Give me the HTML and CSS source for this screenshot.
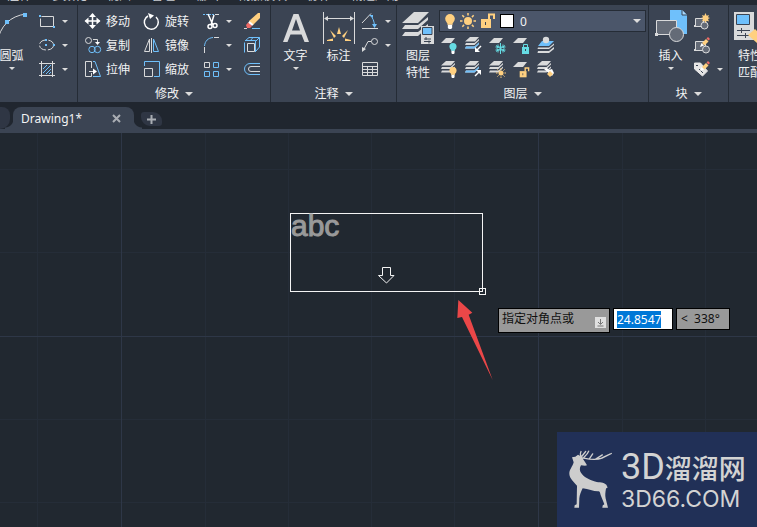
FILE: index.html
```html
<!DOCTYPE html>
<html lang="zh-CN">
<head>
<meta charset="utf-8">
<title>Drawing1</title>
<link rel="stylesheet" href="styles.css">
</head>
<body>
<svg class="defs" aria-hidden="true">
  <defs>
    <symbol id="sheets" viewBox="0 0 20 20"><path class="f" d="M6 2h9l-4 4.500H1zM2 8l-1 2h9.500L15 5.500V4l-4.500 4zM2 11.500l-1 2h9.500L15 9V7.500l-4.500 4z"/></symbol>
    <symbol id="sheet" viewBox="0 0 20 20"><path class="f" d="M6 3h9l-4 5H1z"/></symbol>
    <symbol id="bulb" viewBox="0 0 10 14"><circle cx="5" cy="4.500" r="4.500"/><path d="M2.500 7h5v3h-5z"/><path class="w" d="M3 10h4v3l-1 1H4l-1-1z"/></symbol>
    <symbol id="sun" viewBox="0 0 16 16"><circle cx="8" cy="8" r="4"/><path class="ray" d="M8 0v2.500M8 13.500V16M0 8h2.500M13.500 8H16M2.300 2.300l1.800 1.800M11.900 11.900l1.800 1.800M2.300 13.700l1.800-1.800M11.900 4.100l1.800-1.800"/></symbol>
    <symbol id="unlock" viewBox="0 0 16 16"><path d="M1 6h10v9H1z"/><path class="shackle" d="M9 6V1.500h5V6"/><path class="hole" d="M5.500 9v3"/></symbol>
    <symbol id="pencil" viewBox="0 0 10 10"><path class="yf" d="M2 6l4-4 2.500 2.500-4 4z"/><path class="rf" d="M6.500 1.500L8 0l2 2-1.500 1.500z"/><path class="w" d="M0 10l1.500-4 2.500 2.500z"/></symbol>
  </defs>
</svg>

<nav class="menu">
  <a href="#annotate">注释</a><a href="#parametric">参数化</a><a href="#view">视图</a><a href="#manage">管理</a><a href="#output">输出</a><a href="#addins">附加模块</a><a href="#collab">协作</a><a href="#apps">精选应用</a>
</nav>

<div class="ribbon">
  <section class="panel draw">
    <div class="body">
      <button class="big"><svg class="i32" viewBox="0 0 32 32"><path class="s2" d="M1 31C4 14 14 4 30 2"/><path class="bf" d="M9 8h4v4H9zM27 1h4v4h-4z"/></svg><span>圆弧</span><i class="caret"></i></button>
      <div class="rows">
        <button class="tool"><svg class="i20" viewBox="0 0 20 20"><path class="s" d="M4.500 5.500h12v10h-13v-8"/><path class="bf" d="M2 4h2v2H2zM16 15h2v2h-2z"/></svg><i class="caret"></i></button>
        <button class="tool"><svg class="i20" viewBox="0 0 20 20"><ellipse class="s" cx="9.500" cy="10" rx="7" ry="5" stroke-dasharray="8 2"/><path class="bf" d="M8 4h2v2H8zM8 9h2v2H8zM16 9h2v2h-2z"/></svg><i class="caret"></i></button>
        <button class="tool"><svg class="i20" viewBox="0 0 20 20"><path class="s" d="M2 4.500h16M2 16.500h16M4.500 2v16M15.500 2v16"/><path class="b" d="M6 10l4-4M6 14l8-8M9 15l5-5M12 15l2-2"/></svg><i class="caret"></i></button>
      </div>
    </div>
  </section>

  <section class="panel modify">
    <div class="body">
      <button class="tool"><svg class="i20" viewBox="0 0 20 20"><path class="s2w" d="M9.500 3v14M2.500 10h14"/><path class="w" d="M9.500 2l3.500 4H6zM9.500 18L6 14h7zM1.500 10L5.500 6.500v7zM17.500 10l-4-3.500v7z"/></svg><span>移动</span></button>
      <button class="tool"><svg class="i20" viewBox="0 0 20 20"><path class="s2w" d="M6 5a7 7 0 1 0 8 1"/><path class="w" d="M6 2l6 2.500L8 8z"/></svg><span>旋转</span></button>
      <button class="tool"><svg class="i20" viewBox="0 0 20 20"><path class="b dash" d="M2 3.500h12"/><path class="s" d="M14 3.500h4"/><path class="s2w" d="M7 3l5 11M13 4l-3 10"/><circle class="s2w" cx="9" cy="15.500" r="2"/><circle class="s2w" cx="14" cy="14.500" r="2"/></svg><i class="caret"></i></button>
      <button class="tool"><svg class="i20" viewBox="0 0 20 20"><path class="b" d="M10 17.500h8"/><path class="s" d="M2 17.500h3"/><path class="yf" d="M16 2h2v5l-7 7-4-4z"/><path class="w" d="M7.500 10l4 3.500-1.500 1.500-4-3z"/><path class="rf" d="M6 11.500l4 3.500-2 2H5l-1-3z"/></svg></button>

      <button class="tool"><svg class="i20" viewBox="0 0 20 20"><circle class="s" cx="5.500" cy="5.500" r="3"/><path class="s" d="M10 4.500h4.500V8"/><path class="w" d="M12 7h5l-2.500 3z"/><circle class="b" cx="9" cy="14.500" r="3.200"/><circle class="b" cx="14.500" cy="14.500" r="3.200"/></svg><span>复制</span></button>
      <button class="tool"><svg class="i20" viewBox="0 0 20 20"><path class="s" d="M7.500 4v12.500H2.500z"/><path class="b" d="M11.500 4v12.500h5z"/><path class="s" d="M9.500 3v15"/></svg><span>镜像</span></button>
      <button class="tool"><svg class="i20" viewBox="0 0 20 20"><path class="b" d="M3.500 11C4 6 7 3 12 2.500"/><path class="s" d="M13 2.500h5M3.500 12v6"/></svg><i class="caret"></i></button>
      <button class="tool"><svg class="i20" viewBox="0 0 20 20"><path class="b" d="M2.500 17.500V7.500M3 6l4-3.500h10.500V12L14 16M14 6l3.500-3.500M3 5.500h10.500V17M11 2.500L8 6"/><path class="s" d="M5.500 8.500h7v8h-7z"/></svg></button>

      <button class="tool"><svg class="i20" viewBox="0 0 20 20"><path class="s" d="M8.500 9V2.500h-6v15h6V14M6 12.500h5"/><path class="w" d="M10 9.500l4 3-4 3z"/><path class="b" d="M10 2.500h2l5.500 15H10"/></svg><span>拉伸</span></button>
      <button class="tool"><svg class="i20" viewBox="0 0 20 20"><path class="b" d="M2.500 7V2.500h15v15H12"/><path class="s" d="M2.500 9.500h8v8h-8z"/></svg><span>缩放</span></button>
      <button class="tool"><svg class="i20" viewBox="0 0 20 20"><path class="s" d="M3.500 3.500h5v5h-5z"/><path class="b" d="M12.500 3.500h5v5h-5zM3.500 12.500h5v5h-5zM12.500 12.500h5v5h-5z"/></svg><i class="caret"></i></button>
      <button class="tool"><svg class="i20" viewBox="0 0 20 20"><path class="b" d="M18 4.500H8a5.500 5.500 0 0 0 0 11h10"/><path class="s" d="M18 7.500H9a2.500 2.500 0 0 0 0 5h9"/></svg></button>
    </div>
    <button class="title">修改<i class="caret wide"></i></button>
  </section>

  <section class="panel annotate">
    <div class="body">
      <button class="big"><svg class="i32" viewBox="0 0 32 32"><path class="f" d="M3 30L13.500 2h5L29 30h-4.500l-3-7.500h-11L7.500 30zM12 18.500h8L16 7z"/></svg><span>文字</span><i class="caret"></i></button>
      <button class="big"><svg class="i32" viewBox="0 0 32 32"><path class="s" d="M.5 0v32M31.500 0v32M2 6.500h28"/><path class="f" d="M1 6.500L5 4v5zM31 6.500L27 4v5z"/><path class="yf" d="M16 15l2 7h-4zM7 18l6 6-2 2zM25 18l-6 6 2 2zM4 28l6-1.500V29H4zM28 28l-6-1.500V29h6z"/></svg><span>标注</span></button>
      <div class="rows">
        <button class="tool"><svg class="i20" viewBox="0 0 20 20"><path class="s" d="M2 17.500h16M2 12l9-9.500"/><path class="b" d="M10 4c3 3 4 6 4.500 10"/><path class="bf" d="M9 4h4v3zM12 13h5l-2.500 4z"/></svg><i class="caret"></i></button>
        <button class="tool"><svg class="i20" viewBox="0 0 20 20"><circle class="s" cx="14.500" cy="6.500" r="3"/><path class="s" d="M11 6.500H8L4 14"/><path class="f" d="M2 17v-5l4 2z"/></svg><i class="caret"></i></button>
        <button class="tool"><svg class="i20" viewBox="0 0 20 20"><path class="s" d="M2.500 3.500h15v13h-15zM2 7.500h16M2 10.500h16M2 13.500h16M7.500 7v10M12.500 7v10"/></svg></button>
      </div>
    </div>
    <button class="title">注释<i class="caret wide"></i></button>
  </section>

  <section class="panel layers">
    <div class="body">
      <button class="big"><svg class="i32" viewBox="0 0 32 32"><path class="f" d="M12 0h15L16 11H0zM3 13l-3 4h16l10-9V5l-10 8zM3 20l-3 4h16l10-9v-3l-10 8z"/><path class="p" d="M19 14h13v18H19z"/><path class="bf" d="M21 16h9v6h-9z"/><path class="d" d="M20.500 15.500h9.500v7h-9.500zM22 27h7M22 29.500h7M24 25v3M27 28.500v3"/></svg><span>图层</span><span>特性</span></button>
      <div class="stack">
        <button class="combo" aria-haspopup="listbox" aria-label="图层">
          <svg class="bulb y" viewBox="0 0 10 14"><use href="#bulb"/></svg>
          <svg class="i16 y" viewBox="0 0 16 16"><use href="#sun"/></svg>
          <svg class="i16 y" viewBox="0 0 16 16"><use href="#unlock"/></svg>
          <i class="swatch"></i><span class="name">0</span><i class="caret wide"></i>
        </button>
        <div class="icons">
          <button class="tool"><svg class="i20" viewBox="0 0 20 20"><use href="#sheet"/><use class="t" href="#bulb" x="9" y="8" width="8" height="11"/></svg></button>
          <button class="tool"><svg class="i20" viewBox="0 0 20 20"><use href="#sheets"/><path class="bf" d="M2 11.500l-1 2h9.500L15 9V7.500l-4.500 4z"/><path class="s2w" d="M17 11l-5 5"/><path class="w" d="M11 17v-5l5 5z"/></svg></button>
          <button class="tool"><svg class="i20" viewBox="0 0 20 20"><use href="#sheet"/><path class="ts" d="M12.500 8v11M8 10.500l9 6M8 16.500l9-6M10 9.500v2.500H7.500M15 9.500v2.500h2.500M10 17.500V15H7.500M15 17.500V15h2.500M10 12h5l1 1.500-1 1.500h-5l-1-1.500z"/></svg></button>
          <button class="tool"><svg class="i20" viewBox="0 0 20 20"><use href="#sheet"/><path class="tf" d="M10 12h7v7h-7z"/><path class="ts" d="M11.500 12V9.500h4V12"/><path class="d" d="M13.500 14v2"/></svg></button>
          <button class="tool"><svg class="i20" viewBox="0 0 20 20"><path class="bf" d="M6 6h12l-5 5H2z"/><circle class="f" cx="10" cy="5" r="3.200"/><path class="f" d="M2 12.500l-.5 1.500H13l5-4V8.500l-5 4zM2 16l-.5 2H13l5-4v-2l-5 4z"/></svg></button>
          <button class="tool"><svg class="i20" viewBox="0 0 20 20"><use href="#sheets"/><use class="y" href="#bulb" x="9" y="8" width="8" height="11"/></svg></button>
          <button class="tool"><svg class="i20" viewBox="0 0 20 20"><use href="#sheets"/><path class="bf" d="M2 11.500l-1 2h9.500L15 9V7.500l-4.500 4z"/><path class="s2w" d="M11 17l5-5"/><path class="w" d="M17 11v5l-5-5z"/></svg></button>
          <button class="tool"><svg class="i20" viewBox="0 0 20 20"><use href="#sheets"/><use class="y" href="#sun" x="8" y="9" width="10" height="10"/></svg></button>
          <button class="tool"><svg class="i20" viewBox="0 0 20 20"><use href="#sheet"/><use class="y" href="#unlock" x="7" y="8" width="11" height="11"/></svg></button>
          <button class="tool"><svg class="i20" viewBox="0 0 20 20"><use href="#sheets"/><path class="w" d="M8 10l3-1 2 2 3-1 2 4-2 3z"/><path class="yf" d="M11 15l3-3 3 3-3 3z"/></svg></button>
        </div>
      </div>
    </div>
    <button class="title">图层<i class="caret wide"></i></button>
  </section>

  <section class="panel block">
    <div class="body">
      <button class="big"><svg class="i32" viewBox="0 0 32 32"><path class="bf" d="M15 -2h12l5 5v19H15z"/><path class="cut" d="M27-2v5h5"/><path class="g" d="M1.500 8.500h20v14h-20z"/><circle class="g" cx="21.500" cy="22.500" r="7"/><path class="p" d="M0 21h3v3H0z"/></svg><span>插入</span><i class="caret"></i></button>
      <div class="rows">
        <button class="tool"><svg class="i20" viewBox="0 0 20 20"><path class="g" d="M3.500 7.500h8v8h-8z"/><circle class="g" cx="12.500" cy="14.500" r="3.500"/><path class="yf" d="M13.500 2l1.200 2.800L17 4l-1 2.300 2 .7-2 1 1 2.500-2.300-.8L13.500 12l-1.200-2.300-2.300.8 1-2.500-2-1 2-.7L10 4l2.300.8z"/><path class="p" d="M2 14h2v2H2z"/></svg></button>
        <button class="tool"><svg class="i20" viewBox="0 0 20 20"><path class="g" d="M3.500 6.500h10v9h-10z"/><circle class="g" cx="14" cy="14.500" r="3.500"/><use href="#pencil" x="8" y="2" width="10" height="10"/><path class="p" d="M2 14h2v2H2z"/></svg></button>
        <button class="tool"><svg class="i20" viewBox="0 0 20 20"><path class="tag" d="M2.500 4h6l7 8-5 5-8-7z"/><path class="d" d="M4 6.500h2M7 10l4 4"/><use href="#pencil" x="8" y="2" width="10" height="10"/></svg><i class="caret"></i></button>
      </div>
    </div>
    <button class="title">块<i class="caret wide"></i></button>
  </section>

  <section class="panel props">
    <div class="body">
      <button class="big"><svg class="i32" viewBox="0 0 32 32"><path class="f" d="M0 0h20v28H0z"/><path class="bf" d="M3 3h13v9H3z"/><path class="d" d="M2.500 2.500h13v10h-13zM3 18.500h13M3 23.500h13M7.500 16v5M11.500 21v5"/><path class="yf" d="M14 23l7-6 9 9-7 5z"/></svg><span>特性</span><span>匹配</span></button>
    </div>
  </section>
</div>

<div class="tabs">
  <span class="previous"></span>
  <div class="tab"><span>Drawing1*</span><button class="close" aria-label="关闭"><svg viewBox="0 0 9 9"><path d="M1 1l7 7M8 1L1 8"/></svg></button></div>
  <button class="new" aria-label="新图形"><svg viewBox="0 0 9 9"><path d="M4.500 0v9M0 4.500h9"/></svg></button>
</div>

<main class="canvas">
  <svg class="grid" aria-hidden="true">
    <defs><pattern id="grid" x="121" y="203" width="417" height="417" patternUnits="userSpaceOnUse">
      <path class="minor" d="M84.500 0v417M167.500 0v417M250.500 0v417M333.500 0v417M0 83.500h417M0 166.500h417M0 250.500h417M0 333.500h417"/>
      <path class="major" d="M.5 0v417M0 .5h417"/>
    </pattern></defs>
    <rect width="100%" height="100%" fill="url(#grid)"/>
  </svg>
  <div class="mtext">abc
    <svg class="down" viewBox="0 0 18 18"><path d="M5.500 1.500h8v8h3.500l-7.500 7.500L1.500 9.500h4z"/></svg>
    <i class="grip"></i>
  </div>
  <svg class="pointer" viewBox="0 0 108 240"><path d="M4 0L46 38 35 44 107 240 15 51 1 54z"/></svg>
  <form class="prompt">
    <label for="distance">指定对角点或<svg viewBox="0 0 11 11"><path class="key" d="M0 0h11v11H0z"/><path class="arr" d="M5.500 2v5M3 5l2.500 2.500L8 5M2.500 9h6"/></svg></label>
    <input id="distance" value="24.8547">
    <output>&lt;  338°</output>
  </form>
  <div class="brand">
    <svg class="deer" viewBox="0 0 135 185">
      <path class="body-fill" d="M12 27l10-1 8-6 10 5 12 18 5 8-6 2-12-2c-5 7-4 17 0 23 8 13 24 21 42 26 14 4 26 1 34 10l4 8-5 3c-2 12-3 20-1 30l7 28h-17l1-7 5-4-9-22c-4-10-3-16-8-17-13 1-30-6-48-9-5 10-9 20-10 30l-1 29H19l1-8 6-3 1-55C12 96 4 88 4 76c0-13 10-21 13-34z"/>
      <path class="antler" d="M42 29c-6-6-6-12-3-19M41 25l12-15M44 31c8-8 14-12 18-22M47 30c20 4 36 7 55 0l28-14M64 32l10-15M83 33l20-13M102 29l24-11"/>
    </svg>
    <div class="words"><div class="cn"><span>3D</span>溜溜网</div><div class="en">3D66.COM</div></div>
  </div>
</main>
<script src="script.js"></script>
</body>
</html>
```
FILE: styles.css
```css
* { box-sizing: border-box; }
html, body { height: 100%; }
body {
  margin: 0;
  display: flex;
  flex-direction: column;
  overflow: hidden;
  background: #212830;
  color: #f2f3f4;
  font: 12px/17px "Noto Sans", "Noto Sans CJK SC", sans-serif;
}
button { margin: 0; padding: 0; border: 0; background: none; color: inherit; font: inherit; }
svg { display: block; flex: none; overflow: visible; }
.defs { position: absolute; width: 0; height: 0; }

.menu { display: flex; align-items: flex-end; gap: 20px; height: 5px; padding: 0 0 1px 7px; overflow: hidden; background: #232932; flex: none; }
.menu a { color: #c9cdd2; text-decoration: none; white-space: nowrap; }

.ribbon { display: flex; flex: none; overflow: hidden; background: #3b4453; }
.panel { display: flex; flex-direction: column; flex: none; height: 97px; padding-top: 4px; border-right: 1px solid #252c36; }
.body { display: flex; height: 72px; }
.title { display: flex; align-items: center; justify-content: center; gap: 6px; padding-top: 3px; line-height: 20px; }
.rows { display: grid; grid-template-rows: repeat(3, 24px); }
.tool { display: flex; align-items: center; gap: 3px; height: 24px; }
.tool .caret { margin-left: 2px; }
.big { display: flex; flex-direction: column; align-items: center; flex: none; width: 43px; padding-top: 3px; white-space: nowrap; }
.big svg { margin-bottom: 3px; }
.big .caret { margin-top: 3px; }
.i32 { width: 32px; height: 32px; }
.i20 { width: 20px; height: 20px; }
.i16 { width: 16px; height: 16px; }
.caret { width: 0; height: 0; border: solid transparent; border-width: 3px 3px 0; border-top-color: #dcdcdc; }
.caret.wide { border-width: 4px 4px 0; }

.draw { width: 78px; }
.draw .body { margin-left: -10px; }
.draw .rows { margin-left: 4px; }
.modify { width: 193px; }
.modify .body { display: grid; grid-template-columns: 59px 59px 41px 20px; padding-left: 5px; }
.annotate { width: 126px; }
.annotate .body { padding-left: 3px; }
.layers { width: 252px; }
.layers .big { width: 42px; }
.stack { flex: 1; padding: 1px 2px 0 0; }
.combo { display: flex; align-items: center; gap: 4px; width: 100%; height: 22px; padding: 0 4px; border: 1px solid #252c36; background: #4b566a; }
.combo .name { flex: 1; text-align: left; padding-left: 2px; }
.combo .bulb { width: 12px; height: 15px; }
.swatch { width: 14px; height: 14px; border: 1px solid #000; background: #fff; }
.icons { display: grid; grid-template-columns: repeat(5, 24px); padding: 1px 0 0 1px; }
.block { width: 80px; }
.props { flex: 1 0 46px; margin-right: -18px; border: 0; }
.props .big { width: 42px; }

.f, .w, .p { fill: #d9dadb; }
.w { fill: #fff; }
.bf { fill: #6fc0fb; }
.yf { fill: #ffd080; }
.rf { fill: #f06a66; }
.tf { fill: #66dce4; }
.s, .s2, .s2w, .b, .ts, .d { fill: none; stroke: #d9dadb; stroke-width: 1; }
.s2w { stroke: #fff; stroke-width: 1.5; }
.b { stroke: #6fc0fb; }
.ts { stroke: #66dce4; }
.d { stroke: #3b4453; }
.dash { stroke-dasharray: 2 1; }
.g { fill: #646b77; stroke: #d9dadb; }
.cut { fill: #a8d9ff; stroke: #3b4453; }
.tag { fill: #e6e6e6; stroke: #e6e6e6; }
.y { fill: #ffd080; stroke: none; }
.t { fill: #66dce4; }
.ray { fill: none; stroke: #ffd080; stroke-width: 1.5; }
.shackle { fill: none; stroke: #ffd080; stroke-width: 2; }
.hole { stroke: #3b4453; stroke-width: 1; }

.tabs { display: flex; flex: none; align-items: flex-end; height: 31px; border-bottom: 4px solid #3b4453; background: #20262f; }
.previous { width: 10px; height: 22px; background: #2f3644; border-radius: 0 8px 10px 0; }
.tab { position: relative; display: flex; align-items: center; justify-content: space-between; width: 121px; height: 22px; margin-left: 3px; padding: 0 13px 0 8px; background: #3b4453; border-radius: 8px 8px 0 0; }
.tab::before, .tab::after { content: ""; position: absolute; bottom: 0; width: 8px; height: 10px; }
.tab::before { right: 100%; background: radial-gradient(circle at 0 0, transparent 8px, #3b4453 9px); }
.tab::after { left: 100%; background: radial-gradient(circle at 100% 0, transparent 8px, #3b4453 9px); }
.close svg, .new svg { width: 9px; height: 9px; fill: none; stroke: #a9adb3; stroke-width: 2; }
.new { display: grid; place-items: center; width: 21px; height: 14px; margin: 0 0 3px 7px; background: #2f3644; border-radius: 3px 9px 3px 9px; }

.canvas { position: relative; flex: 1; min-height: 0; overflow: hidden; }
.grid { width: 100%; height: 100%; }
.grid path { fill: none; stroke: #252d38; }
.grid .major { stroke: #2e3747; }
.mtext { position: absolute; left: 290px; top: 80px; width: 193px; height: 79px; border: 1px solid #f4f4f4; color: #999; font: 30px/24px "Liberation Sans", sans-serif; -webkit-text-stroke: 1px #999; }
.down { position: absolute; left: 86px; top: 52px; width: 18px; height: 18px; fill: none; stroke: #f4f4f4; }
.grip { position: absolute; right: -4px; bottom: -4px; width: 7px; height: 7px; border: 1px solid #f4f4f4; }
.pointer { position: absolute; left: 457px; top: 167px; width: 36px; height: 80px; fill: #eb4748; }
.prompt { position: absolute; left: 498px; top: 175px; display: flex; align-items: flex-start; gap: 3px; color: #101010; }
.prompt label, .prompt input, .prompt output { height: 22px; border: 1px solid #000; background: #999; }
.prompt label { display: flex; width: 112px; height: 25px; padding: 1px 3px; justify-content: space-between; }
.prompt label svg { width: 11px; height: 11px; margin-top: 7px; }
.prompt input { width: 60px; padding: 0 3px; background: #fff; font: inherit; outline: 0; }
.prompt input::selection { background: #0078d7; color: #fff; }
.prompt output { width: 54px; padding: 1px 4px; white-space: pre; }
.key { fill: #e0e0e0; }
.arr { fill: none; stroke: #777; }

.brand { position: absolute; right: 0; bottom: 0; display: flex; gap: 8px; width: 200px; height: 95px; padding: 16px 0 0 11px; background: #213057; color: #d3d3d3; }
.deer { width: 45px; height: 62px; }
.body-fill { fill: #cdcdcd; }
.antler { fill: none; stroke: #cdcdcd; stroke-width: 4; stroke-linecap: round; }
.words { white-space: nowrap; }
.cn { height: 38px; font: 500 27px/38px "Noto Sans CJK SC", sans-serif; }
.cn span { font: 36px/38px Roboto, sans-serif; }
.en { font: 23px/26px Inter, sans-serif; }
```
FILE: script.js
```js
document.getElementById('distance').select();
```
